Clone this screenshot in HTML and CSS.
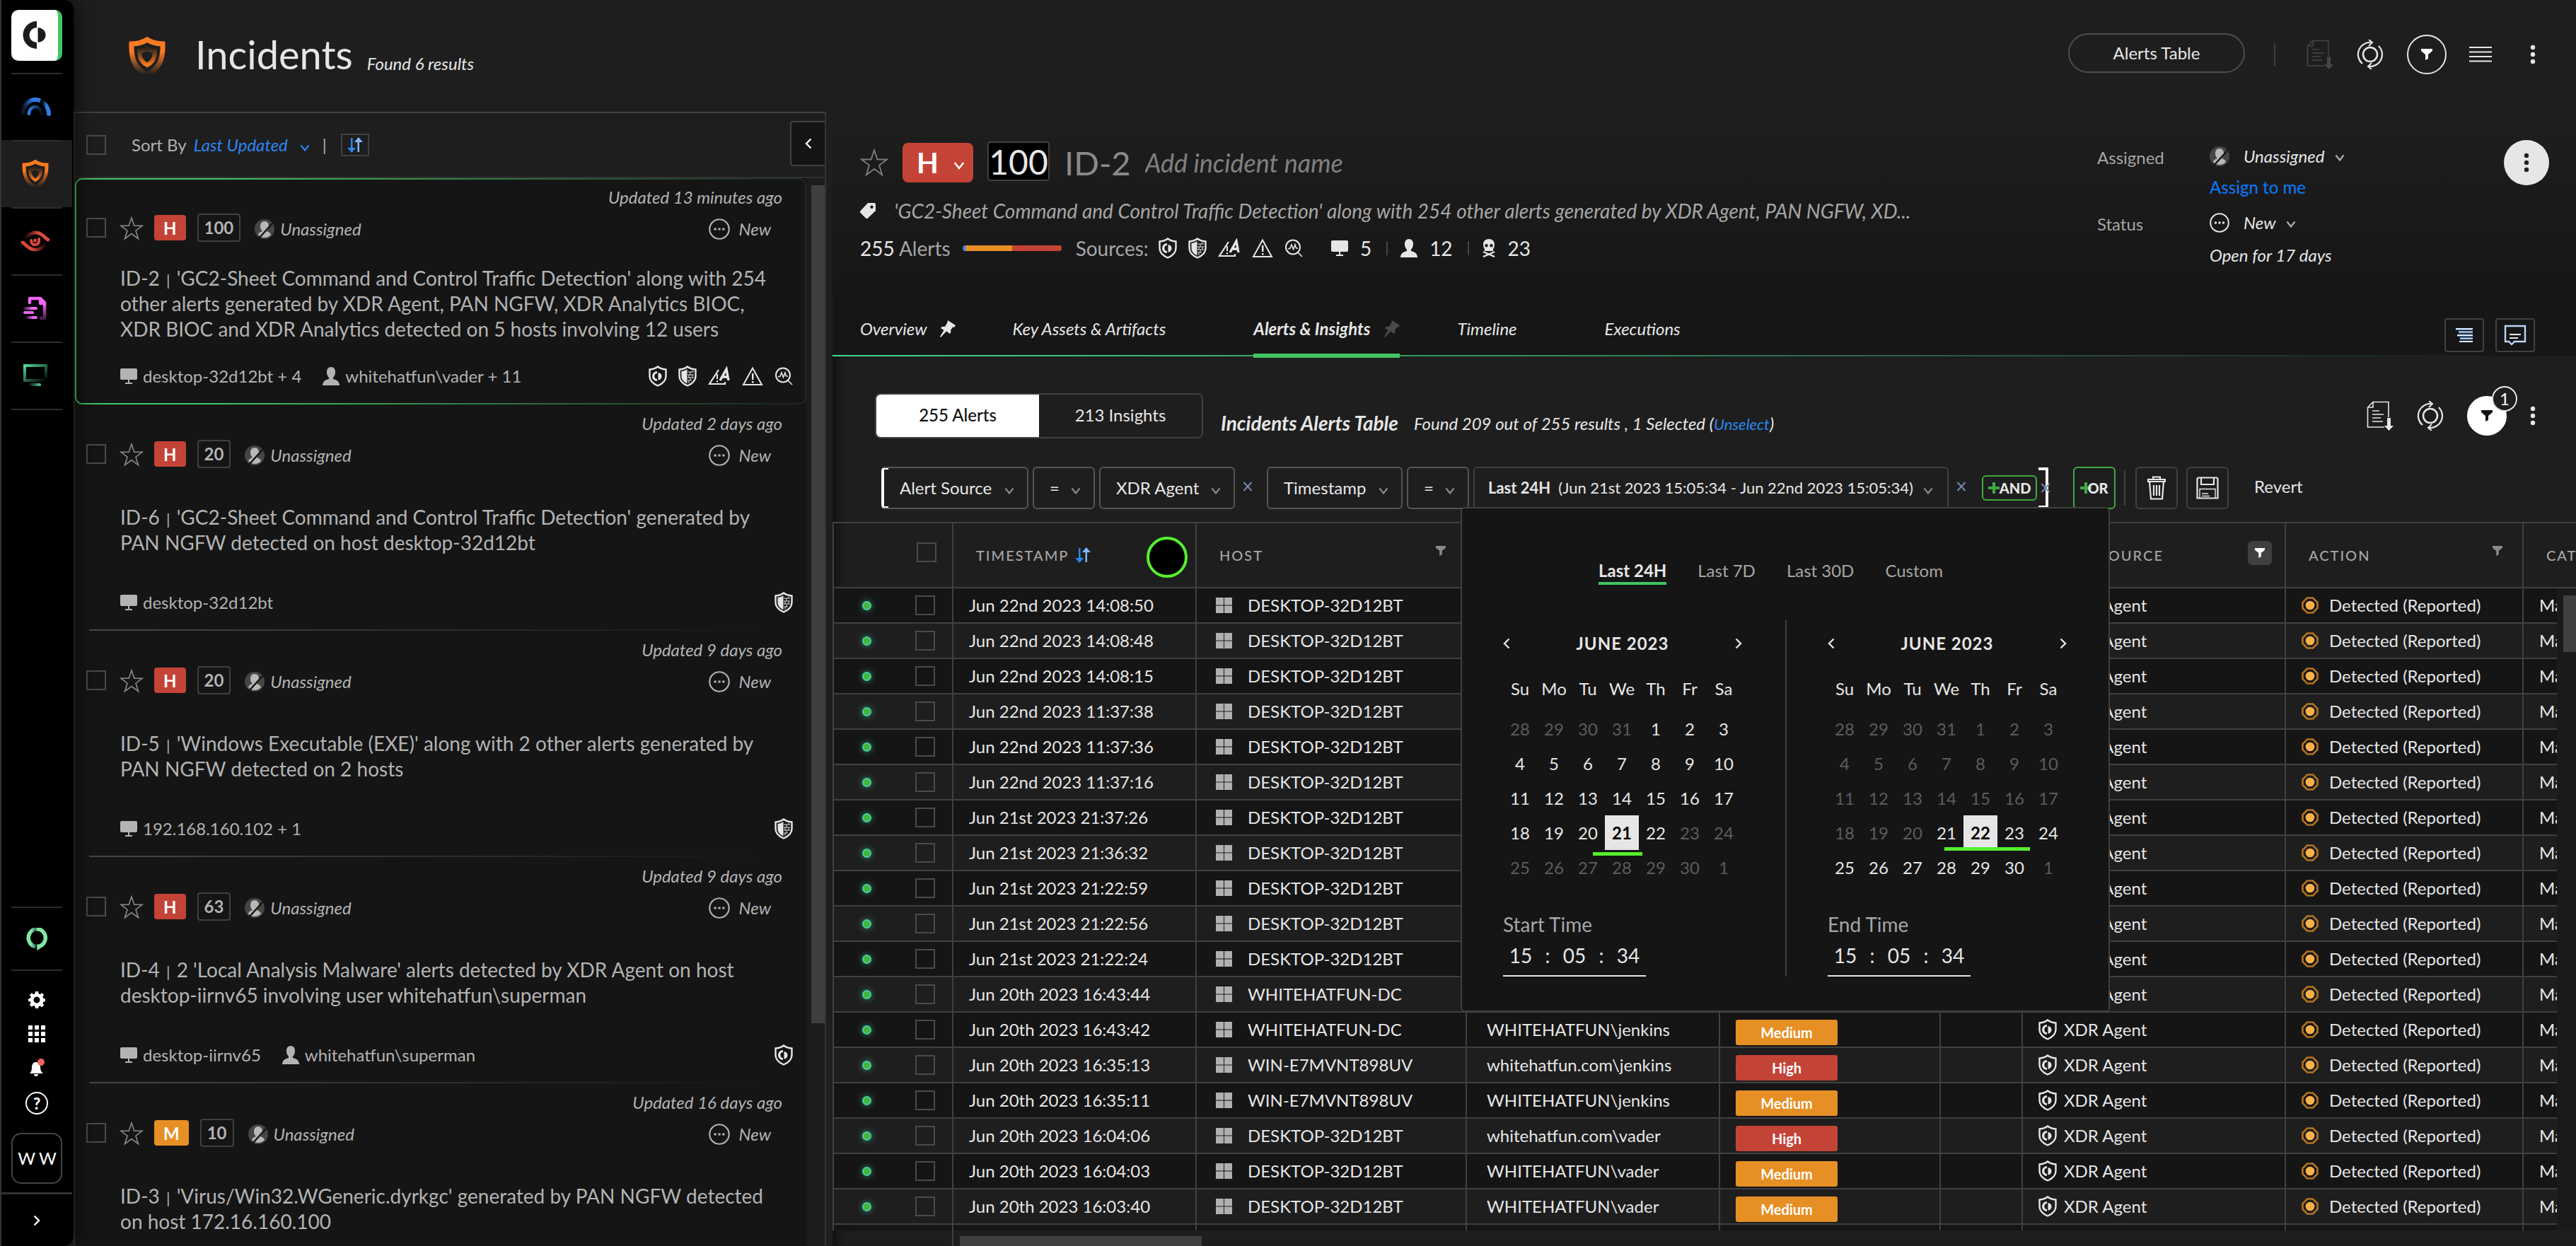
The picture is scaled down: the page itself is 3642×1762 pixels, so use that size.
FILE: index.html
```html
<!DOCTYPE html>
<html lang="en">
<head>
<meta charset="utf-8">
<title>Incidents</title>
<link rel="stylesheet" href="styles.css">
</head>
<body>
<svg class="sprite" aria-hidden="true">
  <defs>
    <linearGradient id="g-orange" x1="0" y1="0" x2="0" y2="1"><stop offset="0.35" stop-color="#fa7a20"/><stop offset="1" stop-color="#fa7a20" stop-opacity="0"/></linearGradient>
    <linearGradient id="g-orange2" x1="0" y1="0" x2="0" y2="1"><stop offset="0" stop-color="#fa7a20" stop-opacity="0.1"/><stop offset="1" stop-color="#fa7a20"/></linearGradient>
    <linearGradient id="g-blue" x1="0" y1="0" x2="1" y2="0"><stop offset="0" stop-color="#2f7de8" stop-opacity="0.1"/><stop offset="0.6" stop-color="#2f7de8"/></linearGradient>
    <linearGradient id="g-blue2" x1="0" y1="0" x2="1" y2="0"><stop offset="0" stop-color="#2f7de8"/><stop offset="1" stop-color="#2f7de8" stop-opacity="0.1"/></linearGradient>
    <linearGradient id="g-red" x1="0" y1="0" x2="1" y2="0"><stop offset="0" stop-color="#d9483b" stop-opacity="0"/><stop offset="0.6" stop-color="#d9483b"/></linearGradient>
    <linearGradient id="g-red2" x1="0" y1="0" x2="1" y2="0"><stop offset="0.4" stop-color="#d9483b"/><stop offset="1" stop-color="#d9483b" stop-opacity="0"/></linearGradient>
    <linearGradient id="g-green" x1="0" y1="0" x2="1" y2="1"><stop offset="0" stop-color="#4fd89b"/><stop offset="1" stop-color="#4fd89b" stop-opacity="0"/></linearGradient>
    <linearGradient id="g-green2" x1="0" y1="0" x2="1" y2="0"><stop offset="0" stop-color="#4fd89b" stop-opacity="0"/><stop offset="1" stop-color="#4fd89b"/></linearGradient>
    <linearGradient id="g-pink" x1="0" y1="0" x2="1" y2="0"><stop offset="0" stop-color="#e35fe8" stop-opacity="0.2"/><stop offset="0.6" stop-color="#f065f5"/></linearGradient>
    <linearGradient id="g-pink2" x1="0" y1="0" x2="0" y2="1"><stop offset="0.3" stop-color="#f065f5"/><stop offset="1" stop-color="#f065f5" stop-opacity="0.3"/></linearGradient>
    <linearGradient id="g-ring" x1="0" y1="0" x2="1" y2="0"><stop offset="0" stop-color="#7fe9a4"/><stop offset="0.15" stop-color="#7fe9a4"/><stop offset="0.45" stop-color="#2f6f6b"/><stop offset="0.5" stop-color="#7fe9a4"/></linearGradient>
  </defs>
  <symbol id="i-logo" viewBox="0 0 36 40"><path d="M21 0A19.500 19.500 0 0 0 21 39V30A10.500 10.500 0 0 1 21 9Z"/><path d="M22.500 9A11 10.500 0 0 1 22.500 30Z"/></symbol>
  <symbol id="i-gauge" viewBox="0 0 44 26"><path fill="none" stroke="url(#g-blue)" stroke-width="6" d="M3.500 25A18.500 21 0 0 1 29 4.500"/><path fill="none" stroke="url(#g-blue)" stroke-width="6" stroke-linecap="round" d="M32.500 7A18.500 20 0 0 1 41 23"/><path fill="none" stroke="url(#g-blue2)" stroke-width="4.500" stroke-linecap="round" d="M13 23A9 10 0 0 1 31 23"/></symbol>
  <symbol id="i-shield" viewBox="0 0 52 58"><path fill="none" stroke="url(#g-orange)" stroke-width="7" d="M26 5C32 9 40 11 48 11C49 34 42 47 26 55C10 47 3 34 4 11C12 11 20 9 26 5Z"/><path fill="none" stroke="url(#g-orange2)" stroke-width="6" d="M26 18C30 20 34 21 37 21C37 32 33 37 26 41C19 37 15 32 15 21C18 21 22 20 26 18Z"/></symbol>
  <symbol id="i-eye" viewBox="0 0 42 30"><path fill="none" stroke="url(#g-red)" stroke-width="5" stroke-linecap="round" d="M5 11C14 2 24 0 33 8C35 10 37 12 39 13"/><path fill="none" stroke="url(#g-red2)" stroke-width="5" stroke-linecap="round" d="M3 17C5 18 7 20 9 22C18 30 28 28 37 19"/><path fill="none" stroke="#d9483b" stroke-width="4" stroke-linecap="round" d="M15 14C15 23 28 22 26 12"/><circle cx="20.500" cy="14" r="2.500" fill="#d9483b"/></symbol>
  <symbol id="i-doc" viewBox="0 0 34 34"><path fill="none" stroke="url(#g-pink2)" stroke-width="4.500" stroke-linecap="round" stroke-linejoin="round" d="M9 9V3H24L30 9V31H25M24 3V10H30"/><rect x="0" y="15" width="20" height="4" rx="2" fill="url(#g-pink)"/><rect x="0" y="21" width="15" height="4" rx="2" fill="#f065f5"/><rect x="4" y="28" width="16" height="4" rx="2" fill="url(#g-pink)"/></symbol>
  <symbol id="i-desktop" viewBox="0 0 34 32"><path fill="none" stroke="url(#g-green)" stroke-width="4" d="M2 2H32V23H2Z"/><rect x="7" y="27" width="18" height="4" rx="2" fill="url(#g-green2)"/></symbol>
  <symbol id="i-ring" viewBox="0 0 30 32"><path fill="none" stroke="url(#g-ring)" stroke-width="5.500" d="M13.500 26.500A12 12.500 0 1 1 17 26.500"/><path fill="#7fe9a4" d="M15 23.500L24 24C22 28 19 30 15.500 32Z"/></symbol>
  <symbol id="i-gear" viewBox="0 0 24 24"><path fill-rule="evenodd" d="M10 0h4l.6 3.200 2 .9 2.800-1.800 2.600 2.700-1.600 2.800.9 2 3 .7v3.500l-3 .7-.9 2 1.700 2.800-2.700 2.700-2.800-1.700-2 .9L14 24h-4l-.6-3.200-2-.8-2.800 1.700-2.700-2.700 1.700-2.800-.9-2L0 14v-3.500l2.900-.7.9-2L2 5l2.600-2.700 2.800 1.800 2-.9zM12 7.500a4.500 4.500 0 1 0 0 9 4.500 4.500 0 0 0 0-9z"/></symbol>
  <symbol id="i-grid" viewBox="0 0 24 24"><path d="M0 0h6v6H0zM9 0h6v6H9zM18 0h6v6h-6zM0 9h6v6H0zM9 9h6v6H9zM18 9h6v6h-6zM0 18h6v6H0zM9 18h6v6H9zM18 18h6v6h-6z"/></symbol>
  <symbol id="i-bell" viewBox="0 0 24 26"><path d="M2 21c3-3 3-6 3-10 1-5 3-6 6-6s6 3 6 7c0 4 1 6 4 9zM8 22h6a3 3 0 0 1-6 0z"/><circle cx="18" cy="5" r="5" fill="#f2685c"/></symbol>
  <symbol id="i-star" viewBox="0 0 34 34"><path fill="none" stroke="currentColor" stroke-width="1.600" d="M17 2l3.800 11.200H32L23 20.200l3.500 11.500L17 24.600l-9.500 7.100L11 20.200 2 13.200h11.200z"/></symbol>
  <symbol id="i-avatar" viewBox="0 0 28 28"><circle cx="14" cy="14" r="14" fill="#454545"/><path fill="#b8b8b8" d="M14 3c4 0 6 3 6 7 0 3-1 5-3 7 3 1 5 2 6 5a12 12 0 0 1-18 0c1-3 3-4 6-5-2-2-3-4-3-7 0-4 2-7 6-7z"/><path stroke="#151515" stroke-width="2.500" d="M6 27L25 6"/></symbol>
  <symbol id="i-status" viewBox="0 0 28 28"><circle cx="14" cy="14" r="12.800" fill="none" stroke="currentColor" stroke-width="2"/><path d="M7 12.500h3v3H7zM12.500 12.500h3v3h-3zM18 12.500h3v3h-3z"/></symbol>
  <symbol id="i-agent" viewBox="0 0 26 30"><path fill="none" stroke="currentColor" stroke-width="2.400" d="M13 1.500C16 4 20 5 24.500 5.500V15C24.500 21 20 25.500 13 28.500C6 25.500 1.500 21 1.500 15V5.500C6 5 10 4 13 1.500Z"/><path d="M12 8a6.500 6.500 0 0 0 0 14v-3a3.600 4 0 0 1 0-8zM13.500 10v10.500a5 5.200 0 0 0 0-10.500z"/></symbol>
  <symbol id="i-ngfw" viewBox="0 0 26 30"><path fill="none" stroke="currentColor" stroke-width="2.400" d="M13 1.500C16 4 20 5 24.500 5.500V15C24.500 21 20 25.500 13 28.500C6 25.500 1.500 21 1.500 15V5.500C6 5 10 4 13 1.500Z"/><path d="M12.500 5V25.500C7 22.500 4.500 19 4.500 15V8C8 7.500 10 6.800 12.500 5Z"/><path fill="none" stroke="currentColor" stroke-width="1" d="M13 9h9M13 13h9M13 17h9M13 21h6M17 9v4M15 13v4M20 13v4M17 17v4M15 21v4M20 7v2"/></symbol>
  <symbol id="i-bioc" viewBox="0 0 32 28"><path fill="none" stroke="currentColor" stroke-width="2.200" d="M15 5L2 25H24V22"/><path stroke="currentColor" stroke-width="2" d="M13 11v7M13 20v2.500"/><path fill="none" stroke="currentColor" stroke-width="3.400" d="M17 20L26 4L29 20M20 15H29"/></symbol>
  <symbol id="i-warn" viewBox="0 0 30 28"><path fill="none" stroke="currentColor" stroke-width="2" d="M15 2.500L28 26H2Z"/><path d="M14 10h2.500v9H14zM14 21h2.500v2.500H14z"/></symbol>
  <symbol id="i-analytics" viewBox="0 0 26 26"><circle cx="12" cy="11.500" r="10" fill="none" stroke="currentColor" stroke-width="2"/><path fill="none" stroke="currentColor" stroke-width="1.600" d="M5 14l3-1 2-5 2.500 6.500L15 8l1.500 5H19M19 19l6 6"/></symbol>
  <symbol id="i-host" viewBox="0 0 24 22"><path d="M2 0h20a2 2 0 0 1 2 2v12a2 2 0 0 1-2 2H2a2 2 0 0 1-2-2V2a2 2 0 0 1 2-2zM11 16h2v4h4v2H7v-2h4z"/></symbol>
  <symbol id="i-user" viewBox="0 0 24 26"><path d="M12 0c4 0 6 3 6 7 0 3-1 6-3 8v2c5 1 8 3 9 8v1H0v-1c1-5 4-7 9-8v-2c-2-2-3-5-3-8 0-4 2-7 6-7z"/></symbol>
  <symbol id="i-skull" viewBox="0 0 20 26"><path fill-rule="evenodd" d="M10 0c5 0 8 3 8 8 0 3-1 5-2 6v3H4v-3C3 13 2 11 2 8c0-5 3-8 8-8zM6.500 7a2 2 0 1 0 0 4.500 2 2 0 0 0 0-4.500zM13.500 7a2 2 0 1 0 0 4.500 2 2 0 0 0 0-4.500z"/><path fill="none" stroke="currentColor" stroke-width="2.400" d="M2 18l16 7M18 18L2 25"/></symbol>
  <symbol id="i-tag" viewBox="0 0 22 22"><path fill-rule="evenodd" d="M11 0h9a2 2 0 0 1 2 2v9L11 21.500a2 2 0 0 1-3 0L.7 14a2 2 0 0 1 0-3zM16.500 3.500a2.200 2.200 0 1 0 0 4.400 2.200 2.200 0 0 0 0-4.400z"/></symbol>
  <symbol id="i-pin" viewBox="0 0 22 24"><path d="M11 0l11 7-2 3-2-.5-3 4.500c1 2 0 4-1 5l-5-3.500L1 24l-1-1 5.500-9L1 11c1-2 4-2.500 6-2l3-5z"/></symbol>
  <symbol id="i-down" viewBox="0 0 14 12"><path fill="none" stroke="currentColor" stroke-width="2.200" d="M1.500 2.500L7 9.500l5.500-7"/></symbol>
  <symbol id="i-left" viewBox="0 0 10 16"><path fill="none" stroke="currentColor" stroke-width="2.400" d="M8.500 1.500L2 8l6.500 6.500"/></symbol>
  <symbol id="i-right" viewBox="0 0 10 16"><path fill="none" stroke="currentColor" stroke-width="2.400" d="M1.500 1.500L8 8l-6.500 6.500"/></symbol>
  <symbol id="i-sort" viewBox="0 0 22 22"><path fill="#2a86f0" d="M5 1h2.500v14H12l-5.700 7L0 15h5z"/><path fill="#7db9f8" d="M14.500 21H17V7h5l-6.200-7L10 7h4.500z"/></symbol>
  <symbol id="i-export" viewBox="0 0 38 42"><path fill="none" stroke="currentColor" stroke-width="1.600" d="M25 37H1.500V9L9 1.500H31V23M9 1.500V9H1.500M8 14h10M8 19h16M8 24h12M8 29h15"/><path d="M29 24h5v11h4l-6.500 7-6.500-7h4z"/></symbol>
  <symbol id="i-refresh" viewBox="0 0 38 42"><circle cx="19" cy="21" r="10" fill="none" stroke="currentColor" stroke-width="2.600"/><path fill="none" stroke="currentColor" stroke-width="2.200" d="M20 4A17 17 0 0 0 8 34M18 38A17 17 0 0 0 31 9"/><path fill="none" stroke="currentColor" stroke-width="2" d="M17 0l5 4-5 5M21 33l-5 5 5 4"/></symbol>
  <symbol id="i-funnel" viewBox="0 0 16 16"><path d="M0 0h16v3l-6 5v6l-4 2V8L0 3z"/></symbol>
  <symbol id="i-lines" viewBox="0 0 32 22"><path stroke="currentColor" stroke-width="2" d="M0 1h32M0 7.500h32M0 14h32M0 20.500h32"/></symbol>
  <symbol id="i-dots" viewBox="0 0 8 28"><circle cx="4" cy="4" r="3.200"/><circle cx="4" cy="14" r="3.200"/><circle cx="4" cy="24" r="3.200"/></symbol>
  <symbol id="i-list" viewBox="0 0 24 20"><path stroke="#dfe9f7" stroke-width="2" d="M0 1h24M4 5.500h20M2 10h22M6 14.500h18M5 19h19"/><path stroke="#2a78d8" stroke-width="1" d="M0 2.500h24M4 7h20M2 11.500h22M6 16h18"/></symbol>
  <symbol id="i-comment" viewBox="0 0 32 30"><path fill="none" stroke="#b9d4f7" stroke-width="2.400" d="M2 2H30V24H15L11 28L7 24H2Z"/><path stroke="#dfe9f7" stroke-width="2" d="M8 14h16M8 19h12"/></symbol>
  <symbol id="i-trash" viewBox="0 0 26 34"><path fill="none" stroke="currentColor" stroke-width="2.200" d="M1 5h24v3H1zM8 5V1.500h10V5M3 8l2 24.500h16L23 8M9 13v15M13 13v15M17 13v15"/></symbol>
  <symbol id="i-save" viewBox="0 0 32 32"><path fill="none" stroke="currentColor" stroke-width="2.200" d="M3 1.500h26l1.500 1.500v27.500h-29V3zM7 2v9h18V2"/><path fill="none" stroke="currentColor" stroke-width="1.400" d="M5 31V17.500h22V31M8 24h9M8 27.500h11"/></symbol>
  <symbol id="i-win" viewBox="0 0 23 22"><path d="M0 0h11v10.500H0zM12 0h11v10.500H12zM0 11.500h11V22H0zM12 11.500h11V22H12z"/></symbol>
  <symbol id="i-plus" viewBox="0 0 16 16"><path d="M6 0h4v6h6v4h-6v6H6v-6H0V6h6z"/></symbol>
  <symbol id="i-close" viewBox="0 0 14 14"><path fill="none" stroke="currentColor" stroke-width="2" d="M1.500 1L12.500 13M12.500 1L1.500 13"/></symbol>
  <symbol id="i-detected" viewBox="0 0 24 24"><path fill="none" stroke="#b3731f" stroke-width="2.600" d="M8 1.500h8L22.500 8v8L16 22.500H8L1.500 16V8z"/><circle cx="12" cy="12" r="6.300" fill="#fcb04a"/></symbol>
</svg>

<nav class="rail" aria-label="Main">
  <a class="logo" href="#" aria-label="Home"><svg width="36" height="40"><use href="#i-logo"/></svg></a>
  <a class="rail-item" href="#" aria-label="Dashboards"><svg width="44" height="26"><use href="#i-gauge"/></svg></a>
  <a class="rail-item on" href="#" aria-label="Incidents"><svg width="38" height="42"><use href="#i-shield"/></svg></a>
  <a class="rail-item" href="#" aria-label="Detection"><svg width="42" height="30"><use href="#i-eye"/></svg></a>
  <a class="rail-item" href="#" aria-label="Reports"><svg width="34" height="34"><use href="#i-doc"/></svg></a>
  <a class="rail-item" href="#" aria-label="Endpoints"><svg width="34" height="32"><use href="#i-desktop"/></svg></a>
  <span class="rail-line"></span>
  <div class="rail-foot">
    <a class="ring" href="#" aria-label="Assistant"><svg width="30" height="32"><use href="#i-ring"/></svg></a>
    <a href="#" aria-label="Settings"><svg width="24" height="24"><use href="#i-gear"/></svg></a>
    <a href="#" aria-label="Apps"><svg width="24" height="24"><use href="#i-grid"/></svg></a>
    <a href="#" aria-label="Notifications"><svg width="24" height="26"><use href="#i-bell"/></svg></a>
    <a class="help" href="#">?</a>
    <a class="user" href="#">WW</a>
    <button class="expand" type="button" aria-label="Expand"><svg width="10" height="16"><use href="#i-right"/></svg></button>
  </div>
</nav>

<div class="app">
  <header class="top">
    <svg class="top-icon" width="52" height="58"><use href="#i-shield"/></svg>
    <h1>Incidents</h1>
    <span class="found">Found 6 results</span>
    <button class="pill" type="button">Alerts Table</button>
    <span class="top-sep"></span>
    <button class="ico dim" type="button" aria-label="Export"><svg width="38" height="42"><use href="#i-export"/></svg></button>
    <button class="ico" type="button" aria-label="Refresh"><svg width="38" height="42"><use href="#i-refresh"/></svg></button>
    <button class="round" type="button" aria-label="Filter"><svg width="16" height="16"><use href="#i-funnel"/></svg></button>
    <button class="ico lines" type="button" aria-label="View"><svg width="32" height="22"><use href="#i-lines"/></svg></button>
    <button class="ico more" type="button" aria-label="More"><svg width="8" height="28"><use href="#i-dots"/></svg></button>
  </header>

  <div class="split">
    <section class="list" aria-label="Incident list">
      <div class="sortbar">
        <input type="checkbox" aria-label="Select all incidents">
        <label class="sort-label" for="sort">Sort By</label>
        <span class="drop sort"><select id="sort"><option>Last Updated</option></select><svg width="14" height="12"><use href="#i-down"/></svg></span>
        <span class="bar">|</span>
        <button class="sort-dir" type="button" aria-label="Sort direction"><svg width="22" height="22"><use href="#i-sort"/></svg></button>
        <button class="collapse" type="button" aria-label="Collapse"><svg width="10" height="16"><use href="#i-left"/></svg></button>
      </div>
      <div class="list-body">
        <div class="cards" id="cards"></div>
        <div class="track"><div class="thumb"></div></div>
      </div>
    </section>

    <main class="detail">
      <section class="summary">
        <div class="about">
          <div class="name">
            <svg class="star" width="40" height="40"><use href="#i-star"/></svg>
            <span class="drop sev"><select aria-label="Severity"><option>H</option></select><svg width="16" height="14"><use href="#i-down"/></svg></span>
            <span class="score">100</span>
            <h2>ID-2</h2>
            <input class="incident-name" type="text" aria-label="Incident name" placeholder="Add incident name">
          </div>
          <p class="desc"><svg width="22" height="22"><use href="#i-tag"/></svg><span>'GC2-Sheet Command and Control Traffic Detection' along with 254 other alerts generated by XDR Agent, PAN NGFW, XD...</span></p>
          <div class="stats">
            <span><b>255</b> Alerts</span>
            <span class="mix"><i></i><i></i><i></i></span>
            <span>Sources:</span>
            <span class="sources"><svg width="26" height="30"><use href="#i-agent"/></svg><svg width="26" height="30"><use href="#i-ngfw"/></svg><svg width="32" height="28"><use href="#i-bioc"/></svg><svg width="30" height="28"><use href="#i-warn"/></svg><svg width="26" height="26"><use href="#i-analytics"/></svg></span>
            <span class="count"><svg width="24" height="22"><use href="#i-host"/></svg>5</span>
            <span class="count"><svg width="24" height="26"><use href="#i-user"/></svg>12</span>
            <span class="count"><svg width="20" height="26"><use href="#i-skull"/></svg>23</span>
          </div>
        </div>
        <div class="facts">
          <label for="assignee">Assigned</label>
          <span class="fact"><svg width="28" height="28"><use href="#i-avatar"/></svg><span class="drop plain"><select id="assignee"><option>Unassigned</option></select><svg width="14" height="12"><use href="#i-down"/></svg></span></span>
          <a class="assign" href="#">Assign to me</a>
          <label for="status">Status</label>
          <span class="fact"><svg width="28" height="28"><use href="#i-status"/></svg><span class="drop plain"><select id="status"><option>New</option></select><svg width="14" height="12"><use href="#i-down"/></svg></span></span>
          <span class="open">Open for 17 days</span>
        </div>
        <button class="actions" type="button" aria-label="Incident actions"><svg width="8" height="36"><use href="#i-dots"/></svg></button>
      </section>
      <nav class="tabs" aria-label="Incident">
        <a href="#">Overview <svg width="22" height="24"><use href="#i-pin"/></svg></a>
        <a href="#">Key Assets &amp; Artifacts</a>
        <a class="on" href="#">Alerts &amp; Insights <svg width="22" height="24"><use href="#i-pin"/></svg></a>
        <a href="#">Timeline</a>
        <a href="#">Executions</a>
        <button type="button" aria-label="List view"><svg width="24" height="20"><use href="#i-list"/></svg></button>
        <button type="button" aria-label="Comments"><svg width="32" height="30"><use href="#i-comment"/></svg></button>
      </nav>

      <section class="alerts">
        <div class="alerts-head">
          <div class="segment"><button class="on" type="button">255 Alerts</button><button type="button">213 Insights</button></div>
          <h3>Incidents Alerts Table</h3>
          <span class="results">Found 209 out of 255 results , 1 Selected (<a href="#">Unselect</a>)</span>
          <button class="ico" type="button" aria-label="Export"><svg width="38" height="42"><use href="#i-export"/></svg></button>
          <button class="ico" type="button" aria-label="Refresh"><svg width="38" height="42"><use href="#i-refresh"/></svg></button>
          <button class="round full" type="button" aria-label="Filter"><svg width="16" height="16"><use href="#i-funnel"/></svg><span class="badge">1</span></button>
          <button class="ico more" type="button" aria-label="More"><svg width="8" height="28"><use href="#i-dots"/></svg></button>
        </div>

        <div class="filters">
          <span class="drop box w208 open-bracket"><select aria-label="Field"><option>Alert Source</option></select><svg width="14" height="12"><use href="#i-down"/></svg></span>
          <span class="drop box w88"><select aria-label="Operator"><option>=</option></select><svg width="14" height="12"><use href="#i-down"/></svg></span>
          <span class="drop box w192"><select aria-label="Value"><option>XDR Agent</option></select><svg width="14" height="12"><use href="#i-down"/></svg></span>
          <button class="x" type="button" aria-label="Remove"><svg width="14" height="14"><use href="#i-close"/></svg></button>
          <span class="drop box w192"><select aria-label="Field"><option>Timestamp</option></select><svg width="14" height="12"><use href="#i-down"/></svg></span>
          <span class="drop box w88"><select aria-label="Operator"><option>=</option></select><svg width="14" height="12"><use href="#i-down"/></svg></span>
          <div class="range">
            <button class="range-value" type="button"><b>Last 24H</b><span>(Jun 21st 2023 15:05:34 - Jun 22nd 2023 15:05:34)</span><svg width="14" height="12"><use href="#i-down"/></svg></button>
            <div class="popup">
              <div class="presets"><button class="on" type="button">Last 24H</button><button type="button">Last 7D</button><button type="button">Last 30D</button><button type="button">Custom</button></div>
              <div class="months">
                <div class="month" data-from="5" data-to="26" data-picked="25">
                  <div class="month-head"><button type="button" aria-label="Previous month"><svg width="10" height="16"><use href="#i-left"/></svg></button><b>JUNE 2023</b><button type="button" aria-label="Next month"><svg width="10" height="16"><use href="#i-right"/></svg></button></div>
                  <table class="days"></table>
                  <span class="mark start"></span>
                  <div class="clock"><label for="sh">Start Time</label><div><input id="sh" value="15"> : <input aria-label="Start minute" value="05"> : <input aria-label="Start second" value="34"></div></div>
                </div>
                <div class="month" data-from="25" data-to="34" data-picked="26">
                  <div class="month-head"><button type="button" aria-label="Previous month"><svg width="10" height="16"><use href="#i-left"/></svg></button><b>JUNE 2023</b><button type="button" aria-label="Next month"><svg width="10" height="16"><use href="#i-right"/></svg></button></div>
                  <table class="days"></table>
                  <span class="mark end"></span>
                  <div class="clock"><label for="eh">End Time</label><div><input id="eh" value="15"> : <input aria-label="End minute" value="05"> : <input aria-label="End second" value="34"></div></div>
                </div>
              </div>
            </div>
          </div>
          <button class="x" type="button" aria-label="Remove"><svg width="14" height="14"><use href="#i-close"/></svg></button>
          <button class="and" type="button"><svg width="16" height="16"><use href="#i-plus"/></svg>AND</button>
          <span class="close-bracket"><button class="x" type="button" aria-label="Remove group"><svg width="14" height="14"><use href="#i-close"/></svg></button></span>
          <button class="or" type="button"><span>OR</span><svg width="16" height="16"><use href="#i-plus"/></svg></button>
          <span class="sep"></span>
          <button class="tool" type="button" aria-label="Delete"><svg width="26" height="34"><use href="#i-trash"/></svg></button>
          <button class="tool" type="button" aria-label="Save"><svg width="32" height="32"><use href="#i-save"/></svg></button>
          <button class="revert" type="button">Revert</button>
        </div>

        <div class="grid">
          <table class="data">
            <colgroup><col class="c1"><col class="c2"><col class="c3"><col class="c4"><col class="c5"><col class="c6"><col class="c7"><col class="c8"><col class="c9"></colgroup>
            <thead><tr>
              <th><input type="checkbox" aria-label="Select all alerts"></th>
              <th><div>TIMESTAMP <svg width="22" height="22"><use href="#i-sort"/></svg><span class="pointer"></span></div></th>
              <th><div>HOST <svg class="fun" width="14" height="14"><use href="#i-funnel"/></svg></div></th>
              <th><div>USER NAME</div></th>
              <th><div>SEVERITY</div></th>
              <th></th>
              <th><div>ALERT SOURCE <span class="fun set"><svg width="14" height="16"><use href="#i-funnel"/></svg></span></div></th>
              <th><div>ACTION <svg class="fun" width="14" height="14"><use href="#i-funnel"/></svg></div></th>
              <th><div>CATEGORY</div></th>
            </tr></thead>
            <tbody id="rows"></tbody>
          </table>
          <div class="vtrack"><div class="vthumb"></div></div>
        </div>
        <div class="htrack"><div class="hthumb"></div></div>
      </section>
    </main>
  </div>
</div>
<script src="app.js"></script>
</body>
</html>
```
FILE: app.js
```js
const icon = (name, w, h) => `<svg width="${w}" height="${h}"><use href="#i-${name}"/></svg>`;

const sizes = { agent: [26, 30], ngfw: [26, 30], bioc: [32, 28], warn: [30, 28], analytics: [26, 26] };

const incidents = [
  { ago: '13 minutes', sev: 'H', score: 100, text: "ID-2 | 'GC2-Sheet Command and Control Traffic Detection' along with 254 other alerts generated by XDR Agent, PAN NGFW, XDR Analytics BIOC, XDR BIOC and XDR Analytics detected on 5 hosts involving 12 users", host: 'desktop-32d12bt + 4', user: 'whitehatfun\\vader + 11', src: ['agent', 'ngfw', 'bioc', 'warn', 'analytics'] },
  { ago: '2 days', sev: 'H', score: 20, text: "ID-6 | 'GC2-Sheet Command and Control Traffic Detection' generated by PAN NGFW detected on host desktop-32d12bt", host: 'desktop-32d12bt', src: ['ngfw'] },
  { ago: '9 days', sev: 'H', score: 20, text: "ID-5 | 'Windows Executable (EXE)' along with 2 other alerts generated by PAN NGFW detected on 2 hosts", host: '192.168.160.102 + 1', src: ['ngfw'] },
  { ago: '9 days', sev: 'H', score: 63, text: "ID-4 | 2 'Local Analysis Malware' alerts detected by XDR Agent on host desktop-iirnv65 involving user whitehatfun\\superman", host: 'desktop-iirnv65', user: 'whitehatfun\\superman', src: ['agent'] },
  { ago: '16 days', sev: 'M', score: 10, text: "ID-3 | 'Virus/Win32.WGeneric.dyrkgc' generated by PAN NGFW detected on host 172.16.160.100" },
];

document.getElementById('cards').innerHTML = incidents.map((c, i) => `
  <article class="card${i === 0 ? ' selected' : ''}">
    <p class="ago">Updated ${c.ago} ago</p>
    <div class="card-row">
      <input type="checkbox" aria-label="Select incident">${icon('star', 34, 34)}
      <span class="chip ${c.sev}">${c.sev}</span><span class="num">${c.score}</span>
      ${icon('avatar', 28, 28)}<em>Unassigned</em>
      <span class="state">${icon('status', 30, 30)}<em>New</em></span>
    </div>
    <p class="title">${c.text.replace(' | ', ' <small>|</small> ')}</p>
    <div class="card-foot">
      ${c.host ? `<span>${icon('host', 24, 22)}${c.host}</span>` : ''}
      ${c.user ? `<span>${icon('user', 24, 26)}${c.user}</span>` : ''}
      ${c.src ? `<span class="srcs">${c.src.map(s => icon(s, ...sizes[s])).join('')}</span>` : ''}
    </div>
  </article>`).join('');

const D = 'DESKTOP-32D12BT', W = 'WHITEHATFUN-DC', E = 'WIN-E7MVNT898UV';
const alerts = [
  ['Jun 22nd 2023 14:08:50', D], ['Jun 22nd 2023 14:08:48', D], ['Jun 22nd 2023 14:08:15', D],
  ['Jun 22nd 2023 11:37:38', D], ['Jun 22nd 2023 11:37:36', D], ['Jun 22nd 2023 11:37:16', D],
  ['Jun 21st 2023 21:37:26', D], ['Jun 21st 2023 21:36:32', D], ['Jun 21st 2023 21:22:59', D],
  ['Jun 21st 2023 21:22:56', D], ['Jun 21st 2023 21:22:24', D], ['Jun 20th 2023 16:43:44', W],
  ['Jun 20th 2023 16:43:42', W, 'WHITEHATFUN\\jenkins', 'Medium'],
  ['Jun 20th 2023 16:35:13', E, 'whitehatfun.com\\jenkins', 'High'],
  ['Jun 20th 2023 16:35:11', E, 'WHITEHATFUN\\jenkins', 'Medium'],
  ['Jun 20th 2023 16:04:06', D, 'whitehatfun.com\\vader', 'High'],
  ['Jun 20th 2023 16:04:03', D, 'WHITEHATFUN\\vader', 'Medium'],
  ['Jun 20th 2023 16:03:40', D, 'WHITEHATFUN\\vader', 'Medium'],
];

document.getElementById('rows').innerHTML = alerts.map(([time, host, user = '', sev = '']) => `
  <tr>
    <td><div class="pick"><span class="live"></span><input type="checkbox" aria-label="Select alert"></div></td>
    <td>${time}</td>
    <td><div class="host">${icon('win', 23, 22)}${host}</div></td>
    <td>${user}</td>
    <td>${sev ? `<span class="level ${sev}">${sev}</span>` : ''}</td>
    <td></td>
    <td><div class="src">${icon('agent', 26, 30)}XDR Agent</div></td>
    <td><div class="act">${icon('detected', 24, 24)}Detected (Reported)</div></td>
    <td>Malware</td>
  </tr>`).join('') + '<tr>' + '<td></td>'.repeat(9) + '</tr>';

// Cells are numbered from Sunday May 28; a cell is enabled between data-from and data-to.
document.querySelectorAll('.month').forEach(month => {
  const { from, to, picked } = month.dataset;
  let html = '<thead><tr>' + ['Su', 'Mo', 'Tu', 'We', 'Th', 'Fr', 'Sa'].map(d => `<th>${d}</th>`).join('') + '</tr></thead>';
  for (let week = 0; week < 5; week++) {
    html += '<tr>';
    for (let day = 1; day <= 7; day++) {
      const cell = week * 7 + day;
      const date = cell <= 4 ? cell + 27 : cell <= 34 ? cell - 4 : 1;
      const cls = cell === +picked ? 'picked' : cell < +from || cell > +to ? 'off' : '';
      html += `<td class="${cls}">${date}</td>`;
    }
    html += '</tr>';
  }
  month.querySelector('.days').innerHTML = html;
});
```
FILE: styles.css
```css
* { box-sizing: border-box; margin: 0; }
html, body { height: 100%; }
body {
  display: flex;
  overflow: hidden;
  background: #1e1e1e;
  color: #e6e6e6;
  font: 24px/30px Lato, "Liberation Sans", sans-serif;
}
button, input, select { font: inherit; color: inherit; border: 0; background: none; padding: 0; border-radius: 0; }
select { appearance: none; outline: 0; }
a { color: inherit; text-decoration: none; }
svg { fill: currentColor; flex: none; display: block; }
.sprite { position: absolute; width: 0; height: 0; }
input[type="checkbox"] { appearance: none; flex: none; display: block; width: 28px; height: 28px; border: 2px solid #4a4a4a; }
.drop { display: inline-grid; align-items: center; }
.drop > * { grid-area: 1 / 1; }
.drop > svg { justify-self: end; pointer-events: none; }

/* navigation rail */
.rail {
  flex: none; width: 104px; padding-right: 2px; display: flex; flex-direction: column; align-items: center;
  background: #000; border-left: 2px solid #333; border-radius: 0 14px 14px 0;
  box-shadow: 4px 0 30px rgba(0, 0, 0, .6); z-index: 2;
}
.logo { width: 72px; height: 72px; margin: 14px 0 17px; border-radius: 10px; background: #fff; color: #1c1c1c; border-right: 6px solid #41c463; display: grid; place-items: center; }
.rail-item { width: 100%; height: 95px; display: grid; place-items: center; background: linear-gradient(#2c2c2c, #2c2c2c) center top / 72px 2px no-repeat; }
.rail-item svg { margin-right: 4px; }
.rail-item.on { background-color: #1e1e1e; }
.rail-line { width: 72px; height: 2px; background: #2c2c2c; }
.rail-foot { margin-top: auto; width: 100%; display: flex; flex-direction: column; align-items: center; color: #fff; }
.rail-foot a { height: 48px; display: grid; place-items: center; }
.rail-foot .ring { width: 72px; height: 91px; margin-bottom: 17px; border-top: 2px solid #2c2c2c; border-bottom: 2px solid #2c2c2c; }
.rail-foot .help { width: 32px; height: 32px; margin: 10px 0 26px; border: 2px solid #fff; border-radius: 50%; font-weight: 900; font-size: 22px; }
.rail-foot .user { width: 72px; height: 72px; padding-left: 6px; border: 2px solid #444; border-radius: 14px; letter-spacing: 5px; }
.expand { width: 100%; height: 76px; margin-top: 12px; border-top: 3px solid #333; display: grid; place-items: center; }

/* page header */
.app { flex: 1; min-width: 0; display: flex; flex-direction: column; }
.top { flex: none; height: 158px; padding: 0 57px 4px 78px; display: flex; align-items: center; }
.top-icon { margin-top: 6px; }
.top h1 { margin-left: 42px; font-size: 56px; line-height: 64px; font-weight: 400; }
.found { margin: 26px auto 0 20px; font-style: italic; }
.pill { width: 250px; height: 56px; margin-bottom: 4px; border: 2px solid #4d4d4d; border-radius: 28px; }
.top-sep { width: 2px; height: 32px; margin: 0 44px 0 41px; background: #3d3d3d; }
.ico { display: grid; place-items: center; margin-right: 33px; }
.dim { color: #454545; }
.round { width: 56px; height: 56px; border: 2px solid #e6e6e6; border-radius: 50%; display: grid; place-items: center; position: relative; color: #fff; }
.full { background: #fff; color: #111; border-color: #fff; }
.ico.lines { margin: 0 54px 0 32px; }
.ico.more { margin: 0; }

.split { flex: 1; min-height: 0; display: flex; }

/* incident list */
.list { flex: none; width: 1064px; display: flex; flex-direction: column; border: 2px solid #333; border-top-color: #404040; border-bottom: 0; background: #151515; }
.sortbar { flex: none; height: 92px; padding-left: 16px; display: flex; align-items: center; background: #1e1e1e; border-bottom: 2px solid #333; }
.sort-label { margin: 0 10px 0 36px; color: #b0b0b0; }
.sort { color: #2a86f0; font-style: italic; }
.sort select { padding-right: 30px; }
.sort svg { margin-top: 8px; }
.bar { margin: 0 20px 0 18px; color: #b0b0b0; }
.sort-dir { width: 40px; height: 32px; border: 2px solid #404040; display: grid; place-items: center; }
.collapse { width: 49px; height: 64px; margin: 0 0 4px auto; border: 2px solid #404040; border-right: 0; border-radius: 4px 0 0 4px; background: #151515; display: grid; place-items: center; color: #fff; }
.list-body { flex: 1; min-height: 0; display: flex; }
.cards { flex: 1; min-width: 0; overflow: hidden; color: #b3b3b3; }
.card { height: 320px; padding: 12px 16px 24px; display: flex; flex-direction: column; background: linear-gradient(90deg, #484848, transparent 92%) 20px 100% / 100% 2px no-repeat; }
.card.selected { padding: 10px 14px 22px; border: 2px solid transparent; border-radius: 10px; background: linear-gradient(#151515, #151515) padding-box, linear-gradient(90deg, #41c463, #41c463 20%, #1d2a20 95%) border-box; }
.ago { padding-right: 18px; text-align: right; font-style: italic; }
.card-row { height: 40px; margin-top: 8px; display: flex; align-items: center; }
.card-row > svg:nth-of-type(1) { margin: 2px 15px 0 19px; color: #8a8a8a; }
.card-row > svg:nth-of-type(2) { margin: 4px 8px 0 20px; }
.card-row em { margin-top: 4px; }
.chip { height: 36px; padding: 0 13px; border-radius: 4px; background: #c44337; color: #fff; font-weight: 700; font-size: 24px; line-height: 38px; }
.chip.M { background: #e68f25; }
.num { height: 40px; margin-left: 16px; padding: 0 8px; border: 2px solid #404040; border-radius: 4px; font-weight: 700; line-height: 36px; }
.state { margin: 4px 34px 0 auto; display: flex; align-items: center; gap: 12px; }
.state em { margin: 0; }
.title { margin: auto 36px auto 48px; font-size: 28px; line-height: 36px; }
.title small { margin: 0 2px; font-size: 22px; line-height: 22px; }
.card-foot { height: 32px; margin: 0 3px 0 48px; display: flex; align-items: center; gap: 30px; }
.card-foot > span { display: flex; align-items: center; gap: 8px; }
.card-foot .srcs { margin-left: auto; gap: 16px; color: #e6e6e6; }
.track { width: 26px; padding: 10px 0 0 7px; background: #1c1c1c; }
.thumb { height: 79%; background: #3f3f3f; }

/* incident summary */
.detail { flex: 1; min-width: 0; margin-left: 9px; display: flex; flex-direction: column; background: #1e1e1e; box-shadow: inset 20px 0 20px -16px rgba(0, 0, 0, .6); }
.summary { flex: none; height: 262px; padding: 40px 38px 0 39px; display: flex; background: linear-gradient(#1e1e1e, #161616); }
.about { flex: 1; min-width: 0; }
.name { height: 64px; display: flex; align-items: center; }
.star { color: #7a7a7a; }
.sev { width: 100px; height: 56px; margin-left: 20px; border-radius: 8px; background: #c44337; color: #fff; font-size: 40px; font-weight: 700; }
.sev select { padding-left: 20px; width: 100px; height: 56px; }
.sev svg { margin: 8px 12px 0 0; }
.score { width: 88px; height: 56px; margin: 0 21px 4px 20px; border: 2px solid #404040; border-radius: 4px; background: #000; text-align: center; font-size: 48px; line-height: 54px; }
.name h2 { font-size: 47px; line-height: 56px; font-weight: 400; color: #8a8a8a; }
.incident-name { flex: 1; margin-left: 20px; font-size: 36px; font-style: italic; }
.incident-name::placeholder { color: #808080; }
.desc { height: 36px; margin-top: 18px; display: flex; align-items: center; gap: 26px; font-size: 28px; font-style: italic; }
.desc span { color: #a6a6a6; white-space: nowrap; }
.stats { height: 36px; margin-top: 17px; display: flex; align-items: center; font-size: 28px; color: #a6a6a6; }
.stats b { font-weight: 400; color: #e6e6e6; }
.mix { width: 140px; height: 8px; margin: 0 20px 0 17px; border-radius: 4px; overflow: hidden; display: flex; background: #c44337; }
.mix i { width: 4px; background: #2a86f0; }
.mix i + i { width: 66px; background: #e68f25; }
.mix i + i + i { flex: 1; background: #c44337; }
.sources { margin: 0 40px 0 14px; display: flex; align-items: center; gap: 16px; color: #e6e6e6; }
.count { display: flex; align-items: center; gap: 17px; color: #e6e6e6; }
.count + .count { margin-left: 21px; padding-left: 20px; background: linear-gradient(#444, #444) left center / 2px 20px no-repeat; }
.facts { width: 575px; margin-top: 7px; display: grid; grid-template-columns: 159px 1fr; grid-template-rows: 44px 50px 46px 32px; align-items: start; justify-items: start; line-height: 32px; }
.facts label { padding-top: 2px; color: #a6a6a6; }
.fact { display: flex; align-items: center; gap: 20px; }
.plain { font-style: italic; }
.plain select { padding-right: 28px; }
.plain svg { margin-top: 4px; color: #b0b0b0; }
.assign { grid-column: 2; color: #0a76f5; font-weight: 500; }
.open { grid-column: 2; font-style: italic; }
.actions { width: 64px; height: 64px; border-radius: 50%; background: #e6e6e6; color: #222; display: grid; place-items: center; }

.tabs { flex: none; height: 86px; padding: 0 58px 0 39px; display: flex; align-items: center; background: linear-gradient(90deg, #41d98a, #2f7a55 50%, #161616 97%) 0 82px / 100% 2px no-repeat, linear-gradient(#161616, #161616) 0 0 / 100% 84px no-repeat; }
.tabs a { height: 100%; margin-right: 81px; padding-top: 4px; display: flex; align-items: center; gap: 18px; font-style: italic; }
.tabs a:nth-child(even) { margin-right: 124px; }
.tabs .on { gap: 20px; font-weight: 700; box-shadow: inset 0 -6px #41c463; }
.tabs .on svg { color: #4a4a4a; }
.tabs button { width: 56px; height: 48px; margin: 22px 0 0 16px; border: 2px solid #404040; border-radius: 4px; display: grid; place-items: center; }
.tabs a + button { margin-left: auto; }

/* alerts table head */
.alerts { flex: 1; min-height: 0; display: flex; flex-direction: column; padding-top: 50px; }
.alerts-head { flex: none; height: 64px; padding: 0 57px 0 60px; display: flex; align-items: center; }
.segment { width: 464px; height: 64px; display: flex; border: 2px solid #404040; border-radius: 8px; overflow: hidden; }
.segment button { flex: 1; padding-bottom: 2px; }
.segment .on { background: #fff; color: #111; font-weight: 500; }
.alerts h3 { margin: 20px 22px 0 25px; font-size: 28px; font-style: italic; }
.results { margin: 22px auto 0 0; font-style: italic; }
.results a { color: #2a86f0; font-size: 22px; }
.full { margin-right: 33px; }
.badge { position: absolute; left: 33px; top: -16px; width: 36px; height: 36px; border: 2px solid #e6e6e6; border-radius: 50%; background: #1e1e1e; color: #fff; line-height: 32px; }

.filters { flex: none; height: 60px; margin: 40px 0 18px; padding-left: 69px; display: flex; align-items: center; gap: 6px; }
.box { height: 60px; border: 2px solid #555; border-radius: 6px; }
.box select { height: 56px; padding-left: 22px; }
.box svg { margin: 8px 18px 0 0; color: #8a8a8a; }
.w208 { width: 208px; }
.w192 { width: 192px; }
.w88 { width: 88px; }
.open-bracket { background: linear-gradient(#fff, #fff) 0 0 / 10px 4px no-repeat border-box, linear-gradient(#fff, #fff) 0 100% / 10px 4px no-repeat border-box; border-left: 4px solid #fff; }
.x { width: 33px; height: 34px; padding: 0 0 4px 5px; color: #7388ad; }
.range { position: relative; }
.range-value { width: 672px; height: 60px; padding: 0 20px 0 19px; display: flex; align-items: center; gap: 11px; border: 2px solid #404040; border-radius: 6px; font-size: 22px; white-space: nowrap; }
.range-value svg { margin: 8px 0 0 auto; color: #8a8a8a; }
.and, .or { border: 2px solid #41a845; border-radius: 6px; font-size: 20px; font-weight: 900; display: flex; align-items: center; justify-content: center; }
.and svg, .or svg { color: #41a845; }
.and { width: 78px; height: 36px; margin-left: 2px; }
.or { width: 60px; height: 60px; margin-left: 29px; flex-direction: row-reverse; }
.or svg { margin-right: -6px; }
.close-bracket { width: 14px; height: 58px; margin-left: -4px; border: 4px solid #fff; border-left: 0; position: relative; }
.close-bracket .x { position: absolute; left: -2px; top: 10px; }
.sep { width: 2px; height: 50px; margin: 0 8px 0 6px; background: #404040; }
.tool { width: 60px; height: 60px; margin-right: 6px; border: 2px solid #404040; border-radius: 6px; display: grid; place-items: center; }
.revert { margin: 0 0 4px 24px; }

/* date range popup */
.popup { position: absolute; z-index: 3; top: 57px; left: -18px; width: 918px; height: 714px; padding-top: 74px; border: 2px solid #404040; border-radius: 6px; background: #151515; }
.presets { padding-left: 193px; display: flex; gap: 44px; color: #a6a6a6; }
.presets button { height: 34px; padding-bottom: 4px; border-bottom: 4px solid transparent; line-height: 28px; }
.presets .on { color: #e6e6e6; font-weight: 700; border-color: #41c463; }
.months { margin-top: 50px; height: 504px; display: grid; grid-template-columns: 1fr 1fr; }
.month { position: relative; padding: 18px 0 0 58px; }
.month + .month { border-left: 2px solid #404040; }
.month-head { width: 338px; display: flex; align-items: center; justify-content: space-between; letter-spacing: 1px; }
.days { margin-top: 17px; border-collapse: collapse; table-layout: fixed; width: 336px; text-align: center; }
.days th { height: 64px; padding: 0; font-weight: 400; }
.days td { height: 49px; padding: 0; }
.days .off { color: #5c5c5c; }
.days .picked { background: #e6e6e6; color: #000; font-weight: 700; }
.mark { position: absolute; height: 5px; background: #55f02f; }
.mark.start { left: 185px; top: 328px; width: 70px; }
.mark.end { left: 223px; top: 321px; width: 121px; }
.clock { margin-top: 38px; font-size: 28px; line-height: 36px; color: #a6a6a6; }
.clock div { width: 202px; height: 56px; padding: 8px 4px 0; display: flex; justify-content: space-between; color: #e6e6e6; border-bottom: 2px solid #e6e6e6; }
.clock input { width: 42px; height: 36px; text-align: center; }

/* data grid */
.grid { flex: 1; min-height: 0; overflow: hidden; position: relative; border-top: 2px solid #404040; }
.data { width: 2790px; table-layout: fixed; border-collapse: separate; border-spacing: 0; }
.c1 { width: 171px; } .c2 { width: 344px; } .c3 { width: 382px; } .c4 { width: 358px; } .c5 { width: 312px; }
.c6 { width: 116px; } .c7 { width: 372px; } .c8 { width: 336px; } .c9 { width: 399px; }
.data th, .data td { padding: 0 0 0 22px; text-align: left; border-right: 2px solid #404040; border-bottom: 2px solid #404040; white-space: nowrap; }
.data th { height: 92px; padding: 0 18px 0 32px; color: #a6a6a6; font-size: 20px; font-weight: 500; letter-spacing: 2px; }
.data th:first-child { padding: 0 0 8px 117px; }
.data th:first-child, .data td:first-child { border-left: 2px solid #404040; }
.data th div { display: flex; align-items: center; gap: 9px; }
.data td { height: 50px; }
.data td:nth-child(4) { padding-left: 28px; }
.data tbody tr:nth-child(odd) { background: #151515; }
.data tbody tr:nth-child(even) { background: #1e1e1e; }
.fun { margin: 0 10px 12px auto; color: #8a8a8a; }
.fun.set { width: 34px; height: 34px; margin: 0 0 6px auto; border-radius: 6px; background: #404040; color: #fff; display: grid; place-items: center; }
.pointer { width: 58px; height: 58px; margin: 6px -7px 0 auto; border: 4px solid #55f02f; border-radius: 50%; background: #000; }
.pick { display: flex; align-items: center; gap: 62px; padding-left: 18px; }
.live { width: 13px; height: 13px; border: 2px solid #46d0a0; border-radius: 50%; background: #43b53c; box-shadow: 0 0 10px rgba(80, 220, 170, .6); }
.host { display: flex; align-items: center; gap: 22px; padding-left: 5px; }
.host svg { color: #b0b0b0; }
.level { display: block; width: 144px; height: 36px; margin-top: 8px; border-radius: 3px; color: #fff; font-size: 20px; font-weight: 700; line-height: 36px; text-align: center; }
.level.High { background: #c44337; }
.level.Medium { background: #e68f25; }
.src { display: flex; align-items: center; gap: 10px; }
.act { display: flex; align-items: center; gap: 15px; }
.vtrack { position: absolute; right: 0; top: 92px; bottom: 0; width: 27px; padding: 10px 0 0 9px; background: #1a1a1a; }
.vthumb { height: 80px; background: #404040; }
.htrack { flex: none; height: 22px; padding: 8px 0 0 180px; background: linear-gradient(#404040, #404040) 169px 0 / 2px 100% no-repeat; }
.hthumb { width: 342px; height: 14px; background: #404040; }
```
